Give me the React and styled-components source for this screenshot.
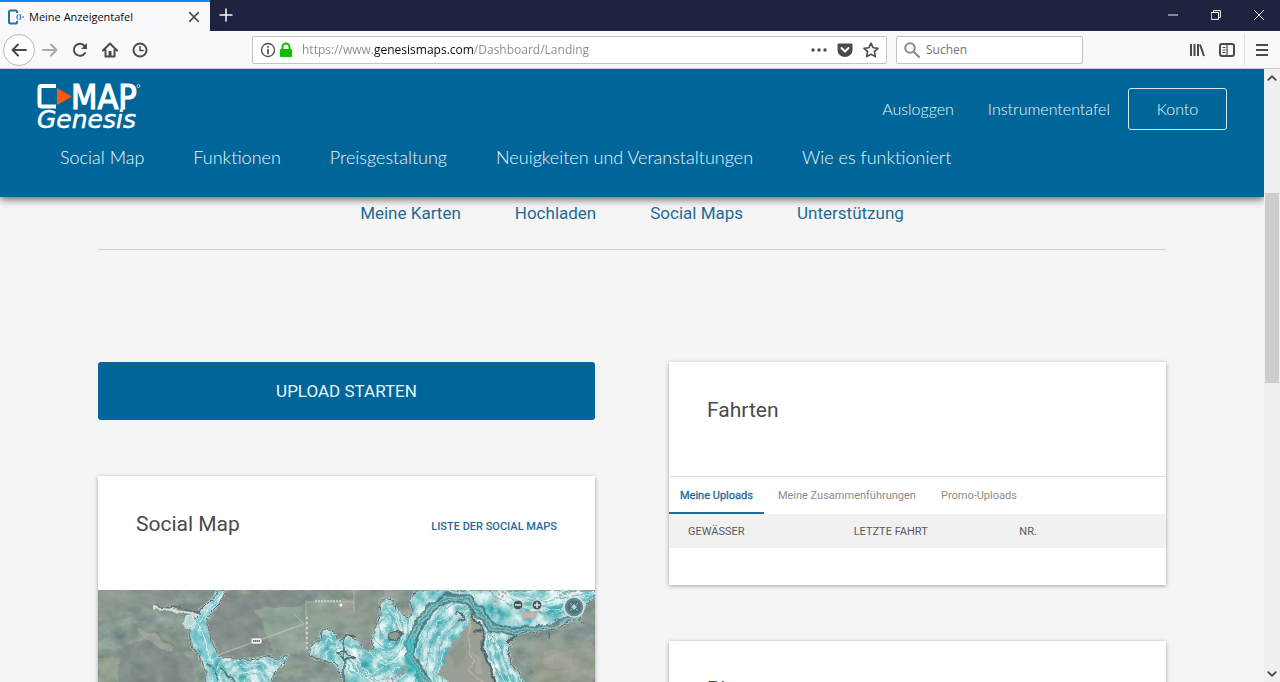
import React from "react"
import styled, { createGlobalStyle } from "styled-components"

const GlobalStyle = createGlobalStyle`
  * {
    box-sizing: border-box;
  }
  body {
    margin: 0;
    font-family: Roboto, "Liberation Sans", sans-serif;
    background-color: #f5f5f5;
  }
  button, input {
    font: inherit;
  }
  button {
    padding: 0;
    border: 0;
    background: none;
    color: inherit;
  }
  a {
    color: inherit;
    text-decoration: none;
  }
`

const BrowserWindow = styled.div`
  display: flex;
  flex-direction: column;
  height: 100vh;
  overflow: hidden;
`

/* browser chrome */

const TitleBar = styled.div`
  display: flex;
  flex: none;
  height: 31px;
  background-color: #202340;
  color: #f9f9fa;
  font-family: "Open Sans", "Noto Sans", sans-serif;
`

const BrowserTab = styled.div`
  display: flex;
  align-items: center;
  gap: 5px;
  width: 210px;
  padding: 0 8px;
  border-top: 2px solid #0a84ff;
  background-color: #f9f9fb;
  color: #0c0c0d;
  font-size: 11px;
`

const TabTitle = styled.span`
  flex: 1;
  white-space: nowrap;
`

const IconButton = styled.button`
  display: flex;
  align-items: center;
  justify-content: center;
  width: ${props => props.$width || 30}px;
  height: 30px;
  opacity: ${props => (props.$faded ? 0.45 : 1)};
`

const WindowControls = styled.div`
  display: flex;
  margin-left: auto;
`

const Toolbar = styled.div`
  display: flex;
  flex: none;
  align-items: center;
  height: 38px;
  padding: 0 3px;
  border-bottom: 1px solid #ccccce;
  background-color: #f9f9fb;
  color: #4a4a4d;
  font-family: "Open Sans", "Noto Sans", sans-serif;
  font-size: 12px;
`

const BackButton = styled(IconButton)`
  width: 32px;
  height: 32px;
  border: 1px solid #b8b8ba;
  border-radius: 50%;
  background-color: #fff;
`

const Spacer = styled.div`
  flex: 0 1 ${props => props.$basis}px;
`

const Field = styled.label`
  display: flex;
  align-items: center;
  gap: ${props => props.$gap}px;
  flex: ${props => (props.$width ? `none` : 1)};
  width: ${props => (props.$width ? `${props.$width}px` : `auto`)};
  height: 28px;
  margin-right: 9px;
  padding: 0 7px;
  border: 1px solid #c4c4c6;
  border-radius: 2px;
  background-color: #fff;
`

const TextInput = styled.input`
  flex: 1;
  min-width: 0;
  padding: 0;
  border: 0;
  outline: 0;
  background: transparent;
  color: #737373;

  &::placeholder {
    color: #737373;
    opacity: 1;
  }
`

/* the domain is darker than the rest of the address */
const UrlInput = styled(TextInput)`
  margin-left: 6px;
  background: linear-gradient(
    90deg,
    #8a8a8c 72px,
    #0c0c0d 72px,
    #0c0c0d 172px,
    #8a8a8c 172px
  );
  background-clip: text;
  -webkit-background-clip: text;
  color: transparent;
`

const UrlActions = styled.div`
  display: flex;
  gap: 10px;
`

const Divider = styled.div`
  width: 1px;
  height: 32px;
  margin: 0 2px;
  background-color: #e0e0e2;
`

const Viewport = styled.div`
  display: flex;
  flex: 1;
  min-height: 0;
`

const Scrollbar = styled.div`
  display: flex;
  flex: none;
  flex-direction: column;
  align-items: center;
  width: 16px;
  background-color: #f0f0f0;
  color: #505050;
`

const ScrollButton = styled.button`
  display: flex;
  align-items: center;
  justify-content: center;
  width: 16px;
  height: 17px;
`

const ScrollGap = styled.div`
  flex: ${props => props.$grow};
`

const ScrollThumb = styled.div`
  flex: 190;
  width: 14px;
  background-color: #cdcdcd;
`

/* page */

const Page = styled.div`
  flex: 1;
  min-width: 0;
  overflow: hidden;
  background-color: #f5f5f5;
`

const Header = styled.header`
  position: relative;
  padding: 12px 37px 20px 36px;
  background-color: #006699;
  box-shadow: 0 2px 8px rgba(0, 0, 0, 0.65);
  color: #e9f6fc;
  font-family: Lato, "Open Sans", sans-serif;
  font-weight: 300;
`

const HeaderTop = styled.div`
  display: flex;
  align-items: center;
  justify-content: space-between;
  height: 56px;
`

const LogoLink = styled.a`
  display: flex;
`

const UserNav = styled.nav`
  display: flex;
  align-items: center;
  gap: 34px;
  font-size: 16px;

  a {
    padding-bottom: 2px;
  }
`

const KontoButton = styled.button`
  width: 99px;
  height: 42px;
  margin-left: -16px;
  padding-bottom: 2px;
  border: 1px solid #d5e8f1;
  border-radius: 3px;
`

const MainNav = styled.nav`
  display: flex;
  gap: 49px;
  padding-left: 24px;
  font-size: 18px;
  line-height: 40px;
  white-space: nowrap;
`

const Content = styled.main`
  padding: 0 98px;
`

const DashboardNav = styled.nav`
  display: flex;
  justify-content: center;
  gap: 54px;
  padding-bottom: 20px;
  border-bottom: 1px solid #cfcfcf;
  color: #1f6a97;
  font-size: 17px;
  line-height: 32px;
`

const Columns = styled.div`
  display: grid;
  grid-template-columns: 1fr 1fr;
  align-items: start;
  gap: 74px;
  margin-top: 112px;
`

const Column = styled.div`
  display: grid;
  gap: 56px;
`

const UploadButton = styled.button`
  height: 58px;
  border-radius: 3px;
  background-color: #006699;
  color: #e8f6fc;
  font-size: 17px;
`

const Card = styled.section`
  padding-bottom: ${props => props.$bottom || 0}px;
  background-color: #fff;
  box-shadow: 0 1px 4px rgba(0, 0, 0, 0.35);
`

const CardHeader = styled.div`
  display: flex;
  align-items: center;
  justify-content: space-between;
  height: 114px;
  padding: 0 38px 18px;
`

const CardTitle = styled.h2`
  margin: 0;
  color: #4a4a4a;
  font-size: 21px;
  font-weight: 400;
`

const CardLink = styled.a`
  padding-top: 4px;
  color: #1f6a97;
  font-size: 11px;
  font-weight: 500;
`

const Tabs = styled.div`
  display: flex;
  gap: 3px;
  height: 38px;
  border-top: 1px solid #dedede;
`

const TabButton = styled.button`
  padding: 2px 11px 0;
  border-bottom: 2px solid ${props => (props.$active ? "#1f6a97" : "transparent")};
  color: ${props => (props.$active ? "#1f6a97" : "#8c8c8c")};
  font-size: 11px;
  -webkit-text-stroke: ${props => (props.$active ? "0.3px" : "0")};
`

const Table = styled.table`
  width: 100%;
  table-layout: fixed;
  border-collapse: collapse;
  background-color: #f1f1f1;

  th {
    height: 34px;
    padding: 0 0 0 19px;
    color: #5a5a5a;
    font-size: 11px;
    font-weight: 400;
    text-align: left;
  }
`

const MapSvg = styled.svg`
  display: block;
  width: 100%;
`

const Icon = ({ size = 16, children, ...rest }) =>
  <svg
    width={size}
    height={size}
    viewBox="0 0 16 16"
    fill="none"
    stroke="currentColor"
    strokeWidth="2"
    strokeLinecap="round"
    strokeLinejoin="round"
    aria-hidden="true"
    {...rest}>
    {children}
  </svg>

const Logo = () =>
  <svg width="108" height="68" viewBox="0 -6 108 68" role="img" aria-label="C-MAP Genesis">
    <path d="M20 5H5.500Q3.500 5 3.500 7V23.500Q3.500 25.500 5.500 25.500H20" fill="none" stroke="#fff" strokeWidth="4" />
    <path d="M21 7L36 15.500L21 24Z" fill="#ff5a0a" />
    <text
      x="35"
      y="28"
      fill="#fff"
      stroke="#fff"
      strokeWidth="1.200"
      fontFamily="DejaVu Sans Condensed, DejaVu Sans, sans-serif"
      fontStretch="condensed"
      fontWeight="400"
      fontSize="34">
      MAP
    </text>
    <circle cx="102.500" cy="5" r="1.500" fill="none" stroke="#cfe6f1" strokeWidth="0.700" />
    <text
      x="1"
      y="47"
      fill="#fff"
      stroke="#fff"
      strokeWidth="0.500"
      fontFamily="DejaVu Sans, sans-serif"
      fontStyle="italic"
      fontWeight="400"
      fontSize="25">
      Genesis
    </text>
  </svg>

const WATER = "M118 0L113 10L106 17L98 26L92 28L91 42L96 58L104 70L108 80L109 130H260L246 92L241 80L235 73L222 68L211 64L213 56L222 51L223 42L230 39L236 43L240 50L250 46L256 47L262 56L270 62L276 59L274 46L281 32L283 14L290 8L298 17L305 26L311 28L315 20L312 9L317 0H497V6L490 12L482 28L470 33L450 39L418 45L412 52L410 62L412 72L420 84L427 92L432 130H176L174 90L177 82L186 74L190 64L180 70L165 66L150 70L125 68L119 66L116 56L112 45L108 32L113 22L121 14L127 0Z"

const LAKE_BED = "M232 43Q250 60 285 62Q300 35 288 14"

const CHANNEL = "M346 130Q326 86 311 64Q314 40 333 19Q351 2 369 10Q384 25 394 37Q420 44 456 38L496 22"

const contours = [0, 1, 2, 3, 4, 5, 6, 7, 8, 9, 10, 11]

const LakeMap = () =>
  <MapSvg viewBox="0 0 497 280" role="img" aria-label="Social Map">
    <defs>
      <filter id="ground" x="0" y="0" width="100%" height="100%" colorInterpolationFilters="sRGB">
        <feTurbulence type="fractalNoise" baseFrequency="0.060 0.080" numOctaves="4" seed="8" />
        <feColorMatrix values="0.260 0 0 0 0.410  0.220 0.080 0 0 0.450  0.220 0 0.080 0 0.420  0 0 0 0 1" />
      </filter>
      <filter id="depth" x="0" y="0" width="100%" height="100%" colorInterpolationFilters="sRGB">
        <feTurbulence type="fractalNoise" baseFrequency="0.080 0.070" numOctaves="4" seed="21" />
        <feColorMatrix values="1.400 0 0 0 -0.090  0.600 0 0 0 0.520  0.550 0 0 0 0.560  0 0 0 0 1" />
      </filter>
      <filter id="wobble" x="-5%" y="-5%" width="110%" height="110%" colorInterpolationFilters="sRGB">
        <feTurbulence type="fractalNoise" baseFrequency="0.090" numOctaves="4" seed="4" result="n" />
        <feDisplacementMap in="SourceGraphic" in2="n" scale="8" xChannelSelector="R" yChannelSelector="G" />
      </filter>
      <clipPath id="water">
        <path d={WATER} />
      </clipPath>
    </defs>
    <rect width="497" height="280" fill="#8b958d" />
    <rect width="497" height="280" filter="url(#ground)" />

    {/* fields and woods */}
    <g opacity="0.400" filter="url(#wobble)">
      <path d="M0 0H80L62 15L35 18L0 30Z" fill="#8f958e" />
      <path d="M126 4L200 0V30L174 60L124 66L110 40Z" fill="#7c7f84" />
      <path d="M20 60L60 42L95 72L104 130H22Z" fill="#787f80" />
      <path d="M158 18H206V62L174 60Z" fill="#9db0a0" />
      <path d="M208 11H256V44L230 38L208 58Z" fill="#98aa98" />
      <path d="M0 68H20V130H0Z" fill="#a3ac94" />
      <path d="M35 36L56 44L76 58L72 65L46 49Z" fill="#b3b7a4" />
      <path d="M432 54H497V130H438Z" fill="#a8a28c" />
      <path d="M445 60H474V78H445Z" fill="#b9ae9c" />
      <path d="M256 2H282L274 44H258Z" fill="#949d90" />
      <path d="M243 9H256V23H243Z" fill="#c5aaa4" />
    </g>

    {/* roads */}
    <g fill="none" stroke="#c4c7be" opacity="0.600">
      <path d="M120 65L206 34" strokeWidth="1.500" />
      <path d="M208 12H256M208 12V62M256 0V24" strokeWidth="1" />
      <path d="M206 34L196 24M256 47L248 42" strokeWidth="1" />
    </g>
    <path d="M209 27V60" stroke="#e1e6e2" strokeWidth="1.500" strokeDasharray="2 3" />

    <g clipPath="url(#water)">
      <rect width="497" height="280" fill="#9cdada" />
      <rect width="497" height="280" filter="url(#depth)" opacity="0.850" />
      <g filter="url(#wobble)" fill="none">
        {contours.map(i =>
          <g key={i} strokeWidth="0.700">
            <path
              d={`M${205 + i * 5} ${78 - i * 2}Q${224 + i * 3} ${20 + i * 5} ${240 + i * 4} ${62 + i * 3}T${300 + i * 2} ${66 + i * 4}`}
              stroke={i % 2 ? "#6ba6a9" : "#e6ffff"} />
            <ellipse cx="290" cy="38" rx={2 + i * 2} ry={3 + i * 3} stroke={i % 3 ? "#dcf8f7" : "#6fa7aa"} />
            <ellipse cx="152" cy="92" rx={3 + i * 4} ry={2 + i * 3} stroke={i % 2 ? "#e4fbf9" : "#79a9ab"} />
            <path
              d={`M${316 + i * 4} 100Q${310 + i * 5} ${40 + i * 2} ${348 + i * 3} ${14 + i * 3}T${380 + i * 2} ${42 + i * 2}`}
              stroke={i % 2 ? "#5c9da0" : "#e9ffff"} />
            <path
              d={`M${385 + i * 5} ${i * 2 - 8}Q${420 + i * 4} ${38 - i * 3} ${497} ${16 - i * 3}`}
              stroke={i % 3 ? "#e6ffff" : "#67a4a7"} />
            <path
              d={`M${388 + i * 3} ${48 + i}Q${384 + i * 3} 62 ${405 + i * 3} 100`}
              stroke={i % 2 ? "#5c9da0" : "#def9f8"} />
          </g>
        )}
        <path d={LAKE_BED} stroke="#4ab3ba" strokeWidth="2" opacity="0.600" />
        <path d="M122 0L114 17L102 30L97 44L104 58L112 76L120 100" stroke="#40bcc4" strokeWidth="5" opacity="0.400" />
        <path d="M124 2L110 20L100 34L106 54L114 74" stroke="#d9f5f5" strokeWidth="1" />
        <path d="M123 78Q135 83 137 100M110 72L120 92" stroke="#557a7f" strokeWidth="1.500" />
        <path d={CHANNEL} stroke="#48686e" strokeWidth="10" opacity="0.750" />
        <path d={CHANNEL} stroke="#78d0d2" strokeWidth="5" opacity="0.850" />
        <path d={CHANNEL} stroke="#557b7f" strokeWidth="1.500" opacity="0.700" />
        <path d="M313 50L309 68L324 92" stroke="#28c6ce" strokeWidth="7" opacity="0.500" />
      </g>
    </g>

    {/* land between the river arms */}
    <g filter="url(#wobble)">
      <path d="M374 24L370 35L364 42L354 54L349 70L340 82L352 94L350 130H402L399 90L391 75L385 57L384 41Z" fill="#999f96" />
      <path d="M352 62L364 50L368 66L358 78Z" fill="#8f988d" />
      <path d="M374 60L382 66L386 84L378 80Z" fill="#a5a99f" />
      <path d="M372 25L370 50L374 72L372 80L386 94" fill="none" stroke="#bab6a2" strokeWidth="1.500" />
    </g>

    <g filter="url(#wobble)" fill="none" strokeLinejoin="round">
      <path d={WATER} stroke="#d9e5e1" strokeWidth="2.500" opacity="0.500" />
      <path d={WATER} stroke="#5f696c" strokeWidth="1" />
      <path d="M374 24L384 41L385 57L391 75L399 94" stroke="#59666a" strokeWidth="2.500" />
      <path d="M98 24L80 22L68 18L54 18" stroke="#d5dedc" strokeWidth="3" />
      <path d="M103 23L88 19L72 17L56 15" stroke="#65676e" strokeWidth="1.500" strokeDasharray="7 1 3 1" />
      <path d="M87 28L93 26L97 32L90 37L86 33Z" fill="#b5d9d6" stroke="#e0e8e5" strokeWidth="1.500" />
      <path d="M246 100V50Q250 44 258 46M238 63L248 62L256 68L248 70Z" stroke="#58666a" strokeWidth="1.500" />
      <path d="M292 44L298 40L303 45L299 50L292 48Z" fill="#8a9d97" stroke="#5a6462" strokeWidth="1.500" />
      <path d="M357 24L365 23L367 30L360 32" stroke="#5e7072" strokeWidth="1.500" />
      <path d="M384 41L374 43M418 45L410 53" stroke="#566467" strokeWidth="2" />
      <path d="M453 41L451 49M482 30L487 32" stroke="#566467" strokeWidth="1" />
      <path d="M290 93L302 83L312 70" stroke="#a78f8d" strokeWidth="5" strokeDasharray="2 2" opacity="0.800" />
    </g>
    <path d="M397 10V22" stroke="#cca8a4" strokeWidth="3" strokeDasharray="3 2" />
    <path d="M396 0L404 7L408 2M461 6L473 2" fill="none" stroke="#cca8a4" strokeWidth="2" strokeDasharray="3 2" />
    <path d="M425 22H437V28H425ZM426 12H434" fill="#c9b3b0" stroke="#bda19e" strokeWidth="1" strokeDasharray="2 1" />

    {/* place labels too small to read at this zoom */}
    <rect x="153" y="48" width="11" height="6" rx="2" fill="#f3f3ef" stroke="#70766f" strokeWidth="0.500" />
    <path d="M155 51H162" stroke="#6f736d" strokeWidth="2" strokeDasharray="1.500 0.500" />
    <path d="M217 11H243" stroke="#d3d8d2" strokeWidth="1.500" strokeDasharray="2 1" />
    <circle cx="243" cy="15" r="1.500" fill="#fff" />

    {/* zoom and compass */}
    <g stroke="#d3e3e3" strokeWidth="1">
      <circle cx="420" cy="15" r="5" fill="#4a5658" />
      <circle cx="439" cy="15" r="5" fill="#4a5658" />
      <path d="M417 15H423M436 15H442M439 12V18" strokeWidth="1.500" />
      <circle cx="476" cy="17" r="10" fill="#6b898b" strokeWidth="1.500" />
      <circle cx="476" cy="17" r="7" fill="#4d7276" stroke="#5d8588" />
      <path d="M476 14L479 17L476 20L473 17Z" fill="#b9d0d0" stroke="none" />
      <path d="M472 13L474 15M480 13L478 15M472 21L474 19M480 21L478 19" strokeWidth="0.700" />
    </g>
  </MapSvg>

const mainLinks = ["Social Map", "Funktionen", "Preisgestaltung", "Neuigkeiten und Veranstaltungen", "Wie es funktioniert"]
const dashboardLinks = ["Meine Karten", "Hochladen", "Social Maps", "Unterstützung"]
const tripTabs = ["Meine Uploads", "Meine Zusammenführungen", "Promo-Uploads"]
const tripColumns = ["GEWÄSSER", "LETZTE FAHRT", "NR."]

const BrowserChrome = () =>
  <>
    <TitleBar>
      <BrowserTab>
        <Icon stroke="#1e73a8" strokeWidth="1.500">
          <path d="M9 4V3Q9 1.500 7.500 1.500H2.500Q1 1.500 1 3V13Q1 14.500 2.500 14.500H7.500Q9 14.500 9 13V12" strokeWidth="2" strokeLinecap="butt" />
          <path d="M9.500 6Q8.300 8 9.500 10M12 5.500Q13.200 8 12 10.500M15 7.500V8.500" strokeWidth="1.200" />
        </Icon>
        <TabTitle>Meine Anzeigentafel</TabTitle>
        <IconButton $width={16} aria-label="Tab schließen">
          <Icon size={14} stroke="#4a4a4d" strokeWidth="1.700"><path d="M3 3L13 13M13 3L3 13" /></Icon>
        </IconButton>
      </BrowserTab>
      <IconButton $width={32} aria-label="Neuer Tab">
        <Icon strokeWidth="1.500"><path d="M8 2V14M2 8H14" /></Icon>
      </IconButton>
      <WindowControls>
        <IconButton $width={43} aria-label="Minimieren">
          <Icon size={10} strokeWidth="1.500"><path d="M0 8H16" /></Icon>
        </IconButton>
        <IconButton $width={43} aria-label="Verkleinern">
          <Icon size={10} strokeWidth="1.600" strokeLinejoin="miter"><path d="M1 4H12V15H1ZM4 4V1H15V12H12" /></Icon>
        </IconButton>
        <IconButton $width={43} aria-label="Schließen">
          <Icon size={10} strokeWidth="1.500"><path d="M0 0L16 16M16 0L0 16" /></Icon>
        </IconButton>
      </WindowControls>
    </TitleBar>
    <Toolbar>
      <BackButton aria-label="Zurück">
        <Icon><path d="M15 8H2M7 2.500L1.500 8L7 13.500" /></Icon>
      </BackButton>
      <IconButton aria-label="Vor" $faded>
        <Icon><path d="M1 8H14M9 2.500L14.500 8L9 13.500" /></Icon>
      </IconButton>
      <IconButton aria-label="Neu laden">
        <Icon>
          <path d="M13 11A6 6 0 1 1 12.500 4" />
          <path d="M15 1V7H9Z" fill="currentColor" stroke="none" />
        </Icon>
      </IconButton>
      <IconButton aria-label="Startseite">
        <Icon>
          <path d="M1 8.500L8 1.500L15 8.500M3.500 8V14.500H12.500V8" />
          <path d="M6.500 9H9.500V14H6.500Z" fill="currentColor" stroke="none" />
        </Icon>
      </IconButton>
      <IconButton aria-label="Chronik">
        <Icon><circle cx="8" cy="8" r="6.500" /><path d="M8 4.500V8.500H11" strokeWidth="1.500" /></Icon>
      </IconButton>
      <Spacer $basis={97} />
      <Field $gap={2}>
        <Icon strokeWidth="1.300">
          <circle cx="8" cy="8" r="6.500" />
          <path d="M8 7.500V11.500M8 4.500V5" strokeWidth="1.700" />
        </Icon>
        <Icon stroke="#12bc00">
          <path d="M4.500 7V5A3.500 3.500 0 0 1 11.500 5V7" />
          <rect x="3" y="8" width="10" height="6" fill="#12bc00" />
        </Icon>
        <UrlInput aria-label="Adresse" defaultValue="https://www.genesismaps.com/Dashboard/Landing" />
        <UrlActions>
          <Icon fill="currentColor" stroke="none">
            <circle cx="2" cy="8" r="1.700" /><circle cx="8" cy="8" r="1.700" /><circle cx="14" cy="8" r="1.700" />
          </Icon>
          <Icon>
            <path d="M1.500 2.500H14.500V8A6.500 6 0 0 1 1.500 8Z" fill="currentColor" />
            <path d="M4.500 6L8 9.500L11.500 6" stroke="#fff" />
          </Icon>
          <Icon strokeWidth="1.600">
            <path d="M8 1.200L10.100 5.700L15 6.300L11.400 9.700L12.300 14.600L8 12.200L3.700 14.600L4.600 9.700L1 6.300L5.900 5.700Z" />
          </Icon>
        </UrlActions>
      </Field>
      <Field $gap={6} $width={187}>
        <Icon stroke="#8a8a8c"><circle cx="6" cy="6" r="4.800" /><path d="M9.800 9.800L15 15" /></Icon>
        <TextInput aria-label="Suche" placeholder="Suchen" />
      </Field>
      <Spacer $basis={90} />
      <IconButton aria-label="Bibliothek">
        <Icon strokeLinecap="butt"><path d="M2 2V14M5.500 2V14M9 2V14M11 2.500L15 14" strokeWidth="2" /></Icon>
      </IconButton>
      <IconButton aria-label="Sidebar">
        <Icon>
          <rect x="1" y="2" width="14" height="12" rx="2" />
          <path d="M8 2V14M4 5.500H6M4 8H6M4 10.500H6" strokeWidth="1.200" />
        </Icon>
      </IconButton>
      <Divider />
      <IconButton aria-label="Menü">
        <Icon strokeLinecap="butt"><path d="M2 3H14M2 8H14M2 13H14" /></Icon>
      </IconButton>
    </Toolbar>
  </>

const TripsCard = () =>
  <Card $bottom={37}>
    <CardHeader>
      <CardTitle>Fahrten</CardTitle>
    </CardHeader>
    <Tabs role="tablist">
      {tripTabs.map((tab, i) =>
        <TabButton key={tab} role="tab" aria-selected={i === 0} $active={i === 0}>{tab}</TabButton>
      )}
    </Tabs>
    <Table>
      <thead>
        <tr>
          {tripColumns.map(name => <th key={name} scope="col">{name}</th>)}
        </tr>
      </thead>
    </Table>
  </Card>

export default () =>

<BrowserWindow>
  <GlobalStyle />
  <BrowserChrome />
  <Viewport>
    <Page>
      <Header>
        <HeaderTop>
          <LogoLink href="#home"><Logo /></LogoLink>
          <UserNav>
            <a href="#logout">Ausloggen</a>
            <a href="#dashboard">Instrumententafel</a>
            <KontoButton>Konto</KontoButton>
          </UserNav>
        </HeaderTop>
        <MainNav>
          {mainLinks.map(link => <a key={link} href="#nav">{link}</a>)}
        </MainNav>
      </Header>
      <Content>
        <DashboardNav>
          {dashboardLinks.map(link => <a key={link} href="#section">{link}</a>)}
        </DashboardNav>
        <Columns>
          <Column>
            <UploadButton>UPLOAD STARTEN</UploadButton>
            <Card>
              <CardHeader>
                <CardTitle>Social Map</CardTitle>
                <CardLink href="#social-maps">LISTE DER SOCIAL MAPS</CardLink>
              </CardHeader>
              <LakeMap />
            </Card>
          </Column>
          <Column>
            <TripsCard />
            <Card>
              <CardHeader>
                <CardTitle>Plan</CardTitle>
              </CardHeader>
            </Card>
          </Column>
        </Columns>
      </Content>
    </Page>
    <Scrollbar>
      <ScrollButton aria-label="Nach oben">
        <Icon size={10} strokeWidth="3"><path d="M2 11L8 5L14 11" /></Icon>
      </ScrollButton>
      <ScrollGap $grow={107} />
      <ScrollThumb />
      <ScrollGap $grow={282} />
      <ScrollButton aria-label="Nach unten">
        <Icon size={10} strokeWidth="3"><path d="M2 5L8 11L14 5" /></Icon>
      </ScrollButton>
    </Scrollbar>
  </Viewport>
</BrowserWindow>
